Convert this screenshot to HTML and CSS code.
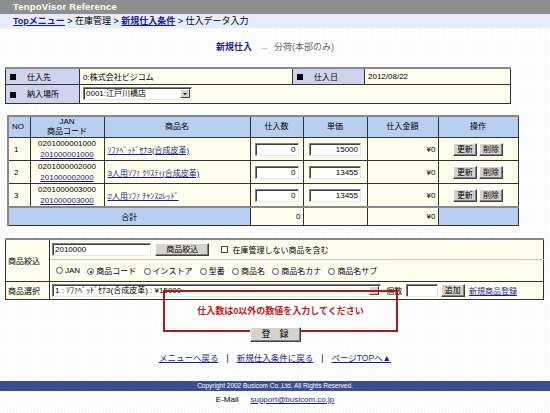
FILE: index.html
```html
<!DOCTYPE html>
<html lang="ja">
<head>
<meta charset="utf-8">
<title>TenpoVisor Reference</title>
<link rel="stylesheet" href="styles.css">
</head>
<body>
<div class="topbar">TenpoVisor Reference</div>
<div class="crumb"><a href="#">Topメニュー</a> &gt; 在庫管理 &gt; <a href="#">新規仕入条件</a> &gt; 仕入データ入力</div>
<div class="steps"><span class="step-on">新規仕入</span><span class="arrow">→</span><span class="step-off">分荷(本部のみ)</span></div>

<table class="info">
  <colgroup><col class="ic1"><col class="ic2"><col class="ic3"><col class="ic4"></colgroup>
  <tr class="ir1"><th><span class="sq"></span>仕入先</th><td>0:株式会社ビジコム</td><th><span class="sq"></span>仕入日</th><td>2012/08/22</td></tr>
  <tr class="ir2"><th><span class="sq"></span>納入場所</th><td colspan="3"><span class="sel sel-store"><span class="sel-text">0001:江戸川橋店</span><span class="sel-btn"><span class="tri"></span></span></span></td></tr>
</table>

<table class="items">
  <colgroup><col class="c-no"><col class="c-jan"><col class="c-name"><col class="c-qty"><col class="c-price"><col class="c-amt"><col class="c-op"></colgroup>
  <tr class="head"><th class="l">NO</th><th>JAN<br>商品コード</th><th>商品名</th><th>仕入数</th><th>単価</th><th>仕入金額</th><th>操作</th></tr>
  <tr class="row">
    <td class="no">1</td>
    <td class="jan">0201000001000<br><a href="#">201000001000</a></td>
    <td class="name"><a href="#">ｿﾌｧﾍﾞｯﾄﾞｾﾅ3(合成皮革)</a></td>
    <td class="ctr"><input class="fld qty" type="text" value="0"></td>
    <td class="ctr"><input class="fld price" type="text" value="15000"></td>
    <td class="amt">¥0</td>
    <td class="ctr"><button class="btn">更新</button> <button class="btn">削除</button></td>
  </tr>
  <tr class="row">
    <td class="no">2</td>
    <td class="jan">0201000002000<br><a href="#">201000002000</a></td>
    <td class="name"><a href="#">3人用ｿﾌｧ ｸﾘｽﾃｨ(合成皮革)</a></td>
    <td class="ctr"><input class="fld qty" type="text" value="0"></td>
    <td class="ctr"><input class="fld price" type="text" value="13455"></td>
    <td class="amt">¥0</td>
    <td class="ctr"><button class="btn">更新</button> <button class="btn">削除</button></td>
  </tr>
  <tr class="row row3">
    <td class="no">3</td>
    <td class="jan">0201000003000<br><a href="#">201000003000</a></td>
    <td class="name"><a href="#">2人用ｿﾌｧ ﾁｬﾝｽ2ﾚｯﾄﾞ</a></td>
    <td class="ctr"><input class="fld qty" type="text" value="0"></td>
    <td class="ctr"><input class="fld price" type="text" value="13455"></td>
    <td class="amt">¥0</td>
    <td class="ctr"><button class="btn">更新</button> <button class="btn">削除</button></td>
  </tr>
  <tr class="total">
    <td colspan="3" class="tlabel">合計</td>
    <td class="num">0</td>
    <td class="blank"></td>
    <td class="num">¥0</td>
    <td class="tlabel"></td>
  </tr>
</table>

<div class="form-wrap">
  <table class="search">
    <colgroup><col class="s-lab"><col class="s-body"></colgroup>
    <tr class="sr1">
      <td rowspan="2" class="slabel">商品絞込</td>
      <td class="sbody">
        <input class="fld code" type="text" value="2010000">
        <button class="btn btn-filter">商品絞込</button>
        <span class="chk"></span><span class="chk-label">在庫管理しない商品を含む</span>
      </td>
    </tr>
    <tr class="sr2">
      <td class="sbody radios">
        <span class="radio"><span class="rc"></span>JAN</span>
        <span class="radio"><span class="rc on"></span>商品コード</span>
        <span class="radio"><span class="rc"></span>インストア</span>
        <span class="radio"><span class="rc"></span>型番</span>
        <span class="radio"><span class="rc"></span>商品名</span>
        <span class="radio"><span class="rc"></span>商品名カナ</span>
        <span class="radio"><span class="rc"></span>商品名サブ</span>
      </td>
    </tr>
    <tr class="sr3">
      <td class="slabel">商品選択</td>
      <td class="sbody">
        <span class="sel sel-item"><span class="sel-text">1 : ｿﾌｧﾍﾞｯﾄﾞｾﾅ3(合成皮革) : ¥15000</span><span class="sel-btn"><span class="tri"></span></span></span>
        <span class="cnt">個数</span>
        <input class="fld count" type="text" value="">
        <button class="btn">追加</button>
        <a href="#" class="newlink">新規商品登録</a>
      </td>
    </tr>
  </table>
  <div class="error">仕入数は0以外の数値を入力してください</div>
  <div class="submit-row"><button class="btn btn-submit">登　録</button></div>
</div>

<div class="links"><a href="#">メニューへ戻る</a><span class="sep">|</span><a href="#">新規仕入条件に戻る</a><span class="sep">|</span><a href="#">ページTOPへ▲</a></div>
<div class="copy">Copyright 2002 Busicom Co.,Ltd. All Rights Reserved.</div>
<div class="mail">E-Mail<a href="#">support@busicom.co.jp</a></div>
</body>
</html>
```

FILE: styles.css
```css
* { box-sizing: border-box; }
body {
  margin: 0;
  width: 550px;
  height: 413px;
  overflow: hidden;
  font-family: "Liberation Sans", "Noto Sans CJK JP", sans-serif;
  font-size: 8px;
  color: #000;
  background-color: #fff;
  background-image: radial-gradient(circle, #f0f0f0 0.6px, transparent 0.8px);
  background-size: 3px 3px;
}
a { color: #1c1c8c; }

.topbar {
  height: 14px;
  background: #8e8e8e;
  color: #fff;
  font-weight: bold;
  font-size: 9.5px;
  line-height: 14px;
  padding-left: 13px;
  letter-spacing: 0.2px;
}
.crumb {
  height: 14px;
  background: #e4edf8;
  font-size: 9px;
  line-height: 14px;
  padding-left: 13px;
}
.crumb a { font-weight: bold; }

.steps {
  margin-top: 12px;
  height: 14px;
  line-height: 14px;
  text-align: center;
  font-size: 9px;
}
.step-on { color: #1c1c8c; font-weight: bold; }
.arrow { color: #a0a0a0; margin: 0 5px 0 8px; }
.step-off { color: #666; }

table { border-collapse: collapse; table-layout: fixed; }
th, td { border: 1px solid #333; padding: 0; font-weight: normal; }

/* info table */
.info {
  margin: 13px 0 0 5px;
  width: 505px;
  border: 1px solid #333;
  border-top: 2px solid #888;
}
.ic1 { width: 74px; }
.ic2 { width: 213px; }
.ic3 { width: 72px; }
.ic4 { width: 146px; }
.info th {
  background: #cfd3ed;
  text-align: left;
  padding-left: 4px;
}
.sq {
  display: inline-block;
  width: 6px;
  height: 6px;
  background: #000;
  margin-right: 11px;
  vertical-align: -0.5px;
}
.info td { background: #fdfdee; padding-left: 3px; }
.ir1 { height: 16px; }
.ir2 { height: 19px; }

.sel {
  display: inline-flex;
  align-items: stretch;
  height: 13px;
  background: #fff;
  border: 1px solid;
  border-color: #808080 #e8e8e8 #e8e8e8 #808080;
  box-shadow: inset 1px 1px 0 #404040;
  vertical-align: middle;
}
.sel-text { flex: 1; padding-left: 2px; line-height: 11px; white-space: nowrap; overflow: hidden; }
.sel-btn {
  width: 10px;
  margin: 1px 1px 1px 0;
  background: #d6d3ce;
  border: 1px solid;
  border-color: #fff #404040 #404040 #fff;
  display: flex;
  align-items: center;
  justify-content: center;
}
.tri {
  width: 0; height: 0;
  border-left: 2px solid transparent;
  border-right: 2px solid transparent;
  border-top: 2px solid #000;
}
.sel-store { width: 109px; }
.sel-item { width: 329px; }

/* items table */
.items {
  margin: 11px 0 0 7px;
  width: 510px;
  border: 1px solid #333;
  border-top: 2px solid #888;
  border-left: 2px solid #888;
}
.c-no { width: 22px; }
.c-jan { width: 74px; }
.c-name { width: 146px; }
.c-qty { width: 53px; }
.c-price { width: 64px; }
.c-amt { width: 71px; }
.c-op { width: 80px; }
.items th {
  background: #b9cff1;
  text-align: center;
  line-height: 10px;
}
.items th.l { text-align: left; padding-left: 3px; }
.head { height: 22px; }
.row { height: 23px; }
.row3 { height: 21px; }
.row td { background: #fdfdee; }
.no { padding-left: 5px !important; }
.jan { text-align: center; line-height: 11px; }
.name { padding-left: 3px !important; }
.ctr { text-align: center; }
.amt, .num { text-align: right; padding-right: 2px !important; }
.total { height: 18px; }
.total .tlabel { background: #b9cff1; text-align: center; }
.total td { border-top: 2px solid #888; }
.total .num, .total .blank { background: #fdfdee; }

.fld {
  height: 13px;
  background: #fff;
  border: 1px solid;
  border-color: #808080 #e8e8e8 #e8e8e8 #808080;
  box-shadow: inset 1px 1px 0 #404040;
  font-family: inherit;
  font-size: 8px;
  padding: 0 2px;
  text-align: right;
  vertical-align: middle;
  margin: 0;
  outline: none;
}
.qty { width: 44px; }
.price { width: 52px; }
.code { width: 99px; text-align: left; }
.count { width: 32px; }

.btn {
  height: 13px;
  padding: 0 3px;
  margin: 0;
  background: #d6d3ce;
  border: 1px solid;
  border-color: #fff #404040 #404040 #fff;
  box-shadow: inset -1px -1px 0 #808080;
  font-family: inherit;
  font-size: 8px;
  line-height: 11px;
  color: #000;
  vertical-align: middle;
}

/* search */
.form-wrap { position: relative; margin: 12px 0 0 5px; }
.search {
  width: 539px;
  border: 1px solid #333;
  border-top: 2px solid #888;
}
.s-lab { width: 44px; }
.search td { background: #fdfdee; }
.slabel { padding-left: 2px; }
.sbody { padding-left: 2px; white-space: nowrap; }
.sr1 { height: 21px; }
.sr1 .sbody { border-bottom: 1px solid #c8c8c8; }
.sr2 { height: 22px; }
.sr2 .sbody { border-top: 1px solid #c8c8c8; }
.sr3 { height: 18px; }
.btn-filter { width: 54px; margin-left: 2px; }
.chk {
  display: inline-block;
  width: 7px; height: 7px;
  border: 1px solid #444;
  background: #fff;
  margin-left: 10px;
  vertical-align: middle;
}
.chk-label { margin-left: 4px; vertical-align: middle; }
.radios { padding-left: 6px; }
.radio { margin-right: 5px; vertical-align: middle; }
.rc {
  display: inline-block;
  width: 7px; height: 7px;
  border-radius: 50%;
  border: 1px solid #555;
  background: #fff;
  margin-right: 2px;
  vertical-align: -1px;
  position: relative;
}
.rc.on::after {
  content: "";
  position: absolute;
  left: 1.5px; top: 1.5px;
  width: 2px; height: 2px;
  border-radius: 50%;
  background: #000;
}
.cnt { margin: 0 2px 0 3px; vertical-align: middle; }
.newlink { margin-left: 2px; vertical-align: middle; }

.error {
  position: absolute;
  left: 158px;
  top: 52px;
  width: 235px;
  height: 42px;
  border: 2px solid #b01818;
  color: #c01818;
  font-weight: bold;
  font-size: 9px;
  text-align: center;
  padding-top: 12px;
}
.submit-row { margin-top: 27px; text-align: center; margin-right: 5px; }
.btn-submit { width: 51px; height: 15px; font-size: 9px; position: relative; }

.links {
  margin-top: 10px;
  text-align: center;
  font-size: 8.5px;
  line-height: 12px;
}
.sep { margin: 0 8px; }
.copy {
  margin-top: 17px;
  height: 10px;
  background: #3b4e8f;
  color: #fff;
  font-size: 6.5px;
  line-height: 10px;
  text-align: center;
}
.mail {
  margin-top: 3px;
  text-align: center;
  font-size: 8px;
  line-height: 11px;
}
.mail a { margin-left: 12px; }
```
